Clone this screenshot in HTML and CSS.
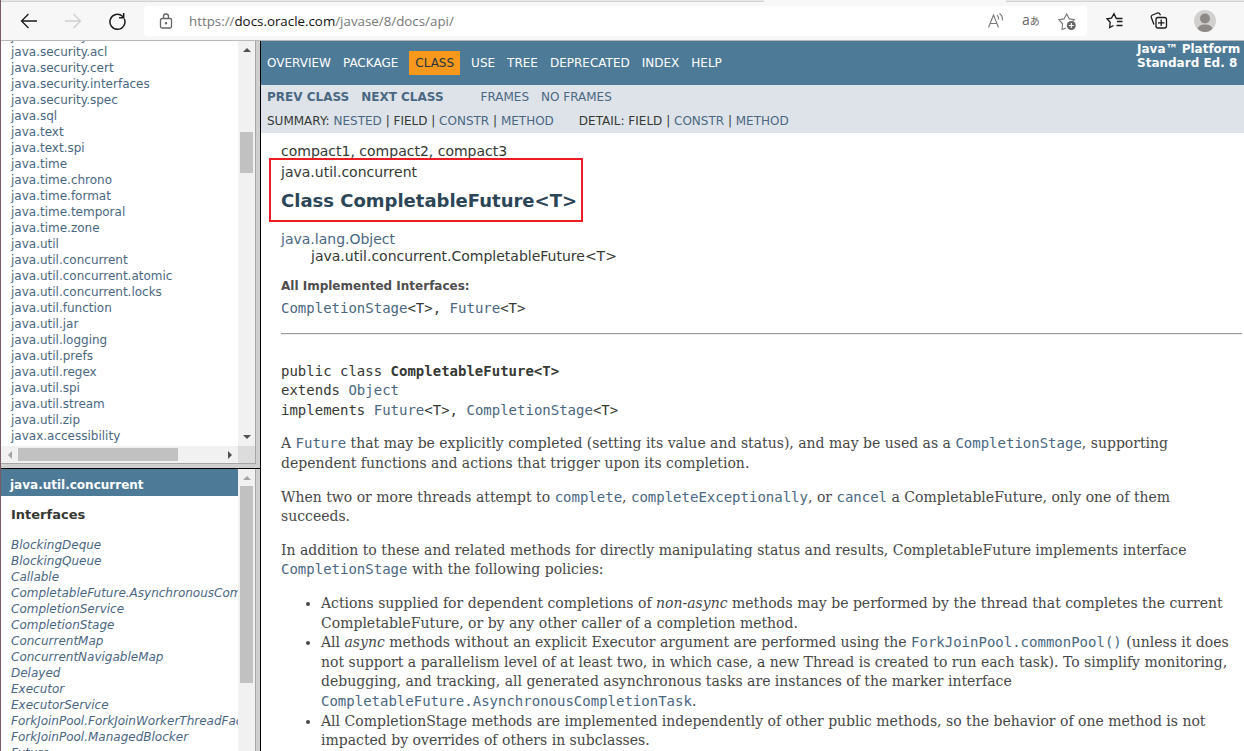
FILE: index.html
```html
<!DOCTYPE html>
<html lang="en">
<head>
<meta charset="utf-8">
<title>CompletableFuture (Java Platform SE 8)</title>
<link rel="stylesheet" href="styles.css">
</head>
<body>
<div class="window">
<header class="chrome">
  <div class="tabs"><span class="tab-left"></span><span class="tab-right"></span></div>
  <div class="toolbar">
    <svg class="ico back" width="18" height="18" viewBox="0 0 18 18"><path d="M17 9H1.5M8.500 2L1.500 9l7 7"/></svg>
    <svg class="ico forward" width="18" height="18" viewBox="0 0 18 18"><path d="M1 9h15.500M9.500 2l7 7l-7 7"/></svg>
    <svg class="ico reload" width="18" height="18" viewBox="0 0 18 18"><path d="M16.300 6.800A7.500 7.500 0 1 1 14.500 4.300l1 1.200M15.700 1v4.700h-4.700"/></svg>
    <div class="address">
      <svg class="ico lock" width="14" height="17" viewBox="0 0 14 17"><rect x="1.500" y="5.500" width="11" height="9.500" rx="1.500"/><path d="M4.500 5.500V3.500a2.500 2.500 0 0 1 5 0v2"/><circle cx="7" cy="10.300" r=".6"/></svg>
      <div class="url">https://<b>docs.oracle.com</b>/javase/8/docs/api/</div>
      <svg class="ico read" width="18" height="18" viewBox="0 0 18 18"><path d="M1.500 15.500L6.500 3l5 12.500M3.300 11.500h6.500M10 3.200q2 1.800 1.500 4.300M12.500 1.500q3.500 2.500 2.800 7"/></svg>
      <div class="translate"><span>a</span><i>あ</i></div>
      <svg class="ico star" width="19" height="19" viewBox="0 0 19 19"><path d="M8 16l-4 1.500l.6-5.700L1 7.700l5-.8L8.700 2l2.600 4.900l5 .8l-2 2.200"/><circle class="disc" cx="13.300" cy="13.500" r="4.500"/><path class="plus" d="M13.300 11v5M10.800 13.500h5"/></svg>
    </div>
    <svg class="ico favs" width="18" height="18" viewBox="0 0 18 18"><path d="M7.500 13.500L3.600 15.600l.6-5.400L1 6.800l4.500-.7L8 1.700l2.300 4.800h6.200M11 9.500h5.500M10.500 13.500h6"/></svg>
    <svg class="ico coll" width="18" height="18" viewBox="0 0 18 18"><path d="M4 12.500L1.300 5.500q-.4-1.800 1.200-2.500l5-2q1.800-.4 2.500 1.200l.5 1"/><rect x="6" y="5.500" width="10.500" height="10.500" rx="2"/><path d="M11.200 7.500v6.500M8 10.800h6.500"/></svg>
    <svg class="avatar" width="22" height="22" viewBox="0 0 22 22"><circle cx="11" cy="11" r="11" fill="#d2d0ce"/><circle cx="11" cy="8.500" r="5" fill="#8d8986"/><path d="M3.500 18.500Q5 14.500 11 14.500t7.500 4Q15.500 22 11 22t-7.500-3.500z" fill="#8d8986"/></svg>
  </div>
</header>
<div class="frames">
  <aside class="left">
    <section class="packages">
      <div class="pane">
        <ul class="list">
          <li>java.security</li><li>java.security.acl</li><li>java.security.cert</li><li>java.security.interfaces</li><li>java.security.spec</li><li>java.sql</li><li>java.text</li><li>java.text.spi</li><li>java.time</li><li>java.time.chrono</li><li>java.time.format</li><li>java.time.temporal</li><li>java.time.zone</li><li>java.util</li><li>java.util.concurrent</li><li>java.util.concurrent.atomic</li><li>java.util.concurrent.locks</li><li>java.util.function</li><li>java.util.jar</li><li>java.util.logging</li><li>java.util.prefs</li><li>java.util.regex</li><li>java.util.spi</li><li>java.util.stream</li><li>java.util.zip</li><li>javax.accessibility</li>
        </ul>
      </div>
      <div class="vbar"><i class="up"></i><span class="thumb1"></span><i class="down"></i></div>
      <div class="hbar"><i class="lt"></i><span class="hthumb"></span><i class="rt"></i></div>
      <div class="corner"></div>
    </section>
    <section class="classes">
      <div class="pane">
        <div class="bar">java.util.concurrent</div>
        <h2>Interfaces</h2>
        <ul class="list italic">
          <li>BlockingDeque</li><li>BlockingQueue</li><li>Callable</li><li>CompletableFuture.AsynchronousCompletionTask</li><li>CompletionService</li><li>CompletionStage</li><li>ConcurrentMap</li><li>ConcurrentNavigableMap</li><li>Delayed</li><li>Executor</li><li>ExecutorService</li><li>ForkJoinPool.ForkJoinWorkerThreadFactory</li><li>ForkJoinPool.ManagedBlocker</li><li>Future</li>
        </ul>
      </div>
      <div class="vbar"><i class="up dim"></i><span class="thumb2"></span></div>
    </section>
  </aside>
  <main class="doc">
    <nav class="top">
      <ul><li>OVERVIEW</li><li>PACKAGE</li><li class="current">CLASS</li><li>USE</li><li>TREE</li><li>DEPRECATED</li><li>INDEX</li><li>HELP</li></ul>
      <div class="about">Java™ Platform<br>Standard Ed. 8</div>
    </nav>
    <div class="sub">
      <div class="row1"><b>PREV CLASS</b><b>NEXT CLASS</b><a class="fr">FRAMES</a><a>NO FRAMES</a></div>
      <div class="row2"><span>SUMMARY: <a>NESTED</a> | FIELD | <a>CONSTR</a> | <a>METHOD</a></span><span>DETAIL: FIELD | <a>CONSTR</a> | <a>METHOD</a></span></div>
    </div>
    <div class="header">
      <div class="profiles">compact1, compact2, compact3</div>
      <div class="pkg">java.util.concurrent</div>
      <h1>Class CompletableFuture&lt;T&gt;</h1>
      <div class="marker"></div>
    </div>
    <div class="content">
      <div class="tree"><a>java.lang.Object</a><div>java.util.concurrent.CompletableFuture&lt;T&gt;</div></div>
      <h3>All Implemented Interfaces:</h3>
      <div class="impl"><a>CompletionStage</a>&lt;T&gt;, <a>Future</a>&lt;T&gt;</div>
      <hr>
      <pre>public class <b>CompletableFuture&lt;T&gt;</b>
extends <a>Object</a>
implements <a>Future</a>&lt;T&gt;, <a>CompletionStage</a>&lt;T&gt;</pre>
      <div class="block">
        <p>A <code>Future</code> that may be explicitly completed (setting its value and status), and may be used as a <code>CompletionStage</code>, supporting<br>dependent functions and actions that trigger upon its completion.</p>
        <p>When two or more threads attempt to <code>complete</code>, <code>completeExceptionally</code>, or <code>cancel</code> a CompletableFuture, only one of them<br>succeeds.</p>
        <p>In addition to these and related methods for directly manipulating status and results, CompletableFuture implements interface<br><code>CompletionStage</code> with the following policies:</p>
        <ul>
          <li>Actions supplied for dependent completions of <em>non-async</em> methods may be performed by the thread that completes the current<br>CompletableFuture, or by any other caller of a completion method.</li>
          <li>All <em>async</em> methods without an explicit Executor argument are performed using the <code>ForkJoinPool.commonPool()</code> (unless it does<br>not support a parallelism level of at least two, in which case, a new Thread is created to run each task). To simplify monitoring,<br>debugging, and tracking, all generated asynchronous tasks are instances of the marker interface<br><code>CompletableFuture.AsynchronousCompletionTask</code>.</li>
          <li>All CompletionStage methods are implemented independently of other public methods, so the behavior of one method is not<br>impacted by overrides of others in subclasses.</li>
        </ul>
      </div>
    </div>
  </main>
</div>
</div>
</body>
</html>
```
FILE: styles.css
```css
* { box-sizing: border-box; }
body { margin: 0; font: 14px "DejaVu Sans", sans-serif; color: #353833; background: #fff; }
ul { list-style: none; margin: 0; padding: 0; }
a { color: #4a6782; }
.window { width: 1244px; height: 751px; overflow: hidden; display: flex; flex-direction: column; border-left: 1px solid #795c63; }
.chrome { height: 41px; flex: none; background: #f7f7f7; border-bottom: 1px solid #b9b9b9; }
.tabs { height: 2px; display: flex; justify-content: space-between; }
.tab-left, .tab-right { background: #e6e6e6; border-bottom: 1px solid #d2d2d2; }
.tab-left { width: 763px; }
.tab-right { width: 238px; }
.toolbar { height: 38px; display: flex; align-items: center; padding-left: 19px; }
.ico { fill: none; stroke: #1b1b1b; stroke-width: 1.3; flex: none; }
.forward { margin-left: 26px; stroke: #cfcfcf; }
.reload { margin-left: 26px; stroke-width: 1.5; }
.address { width: 943px; height: 30px; margin-left: 18px; background: #fff; border-radius: 4px; display: flex; align-items: center; flex: none; }
.lock { margin-left: 15px; stroke: #666; }
.url { margin-left: 16px; width: 798px; font: 13.33px "Open Sans", sans-serif; color: #777; }
.url b { font-weight: 400; color: #111; }
.read, .star { stroke: #777; stroke-width: 1.1; }
.translate { width: 18px; margin-left: 17px; display: flex; align-items: center; color: #666; font: 14px/18px "Open Sans", "Noto Sans CJK JP", sans-serif; }
.translate span { margin-top: -3px; }
.translate i { font: 10px/18px "Noto Sans CJK JP", sans-serif; }
.star { margin-left: 18px; }
.disc { fill: #666; stroke: none; }
.plus { stroke: #fff; }
.favs { margin-left: 19px; }
.coll { margin-left: 26px; }
.avatar { margin-left: 26px; flex: none; }

.frames { flex: 1; min-height: 0; display: flex; }
.left { width: 260px; flex: none; display: flex; flex-direction: column; border-right: 1px solid #000; }
.packages { height: 428px; flex: none; display: grid; grid-template: 405px 17px / 237px 17px; border-bottom: 1px solid #000; background: linear-gradient(#a5a5a5 0 0) 0 422px / 255px 1px no-repeat, #cfcfcf; }
.classes { flex: 1; min-height: 0; display: grid; grid-template: 100% / 237px 17px; background: #cfcfcf; }
.pane { background: #fff; overflow: hidden; }
.vbar { background: #f1f1f1; position: relative; box-shadow: 1px 0 #a5a5a5; display: flex; flex-direction: column; align-items: center; }
.hbar { background: #f1f1f1; display: flex; align-items: center; }
.corner { background: #dcdcdc; box-shadow: 1px 0 #a5a5a5; }
.thumb1, .thumb2 { width: 13px; background: #c1c1c1; }
.thumb1 { height: 41px; margin-top: 80px; }
.thumb2 { height: 197px; margin-top: 6px; }
.hthumb { width: 160px; height: 13px; background: #c1c1c1; margin-left: 6px; }
.up, .down { border: 4px solid transparent; width: 0; height: 0; }
.up { border-top: 0; border-bottom-color: #505050; margin-top: 7px; }
.dim { border-bottom-color: #a3a3a3; }
.down { border-bottom: 0; border-top-color: #505050; margin: auto 0 7px; }
.lt, .rt { width: 0; height: 0; border: 4px solid transparent; }
.lt { border-left: 0; border-right-color: #a3a3a3; margin-left: 7px; }
.rt { border-right: 0; border-left-color: #505050; margin: 0 6px 0 auto; }
.list { padding-left: 10px; font-size: 12px; line-height: 16px; color: #4a6782; white-space: nowrap; }
.packages .list { margin-top: -13px; }
.italic { font-style: italic; }
.bar { height: 27px; padding: 2px 0 0 9px; background: #4d7a97; color: #fff; font-weight: 700; font-size: 12px; line-height: 28px; }
.classes h2 { margin: 10px 0 14px 10px; font-size: 13px; line-height: 17px; }

.doc { flex: 1; min-width: 0; overflow: hidden; }
.top { height: 44px; background: #4d7a97; color: #fff; display: flex; justify-content: space-between; font-size: 12px; }
.top ul { display: flex; padding: 10px 0 0 6px; gap: 12px; line-height: 24px; }
.current { background: #f8981d; color: #253441; padding: 0 6px; height: 24px; margin: 0 -1px; }
.about { width: 107px; padding-top: 1px; font-size: 12px; line-height: 14px; font-weight: 700; white-space: nowrap; }
.sub { height: 48px; background: #dee3e9; padding-left: 6px; font-size: 12px; line-height: 24px; }
.row1, .row2 { display: flex; gap: 12px; }
.row1 b, .row1 a { color: #4a6782; }
.fr { margin-left: 25px; }
.row2 { gap: 25px; }
.header { position: relative; padding: 9px 20px 0; line-height: 18px; height: 98px; }
.pkg { margin-top: 3px; }
h1 { margin: 9px 0 0; font-size: 18px; line-height: 22px; color: #2c4557; }
.marker { position: absolute; left: 8px; top: 25px; width: 314px; height: 64px; border: 2px solid #ed1c24; }
.content { padding: 0 2px 0 20px; }
.tree { line-height: 17px; }
.tree div { padding-left: 30px; }
h3 { margin: 13px 0 0; font-size: 12px; line-height: 16px; color: #4e4e4e; }
.impl { margin-top: 3px; font: 14px/22px "DejaVu Sans Mono", monospace; }
hr { margin: 14px 0 0; border: 0; border-top: 1px solid #9a9a9a; border-bottom: 1px solid #eee; height: 2px; }
pre { margin: 26.6px 0 0; font: 14px/19.6px "DejaVu Sans Mono", monospace; }
.block { font: 14px/19.6px "DejaVu Serif", serif; color: #474747; white-space: nowrap; }
.block p { margin: 14px 0; }
.block ul { list-style: disc; padding-left: 40px; }
code { font: 14px "DejaVu Sans Mono", monospace; color: #4a6782; }
```
